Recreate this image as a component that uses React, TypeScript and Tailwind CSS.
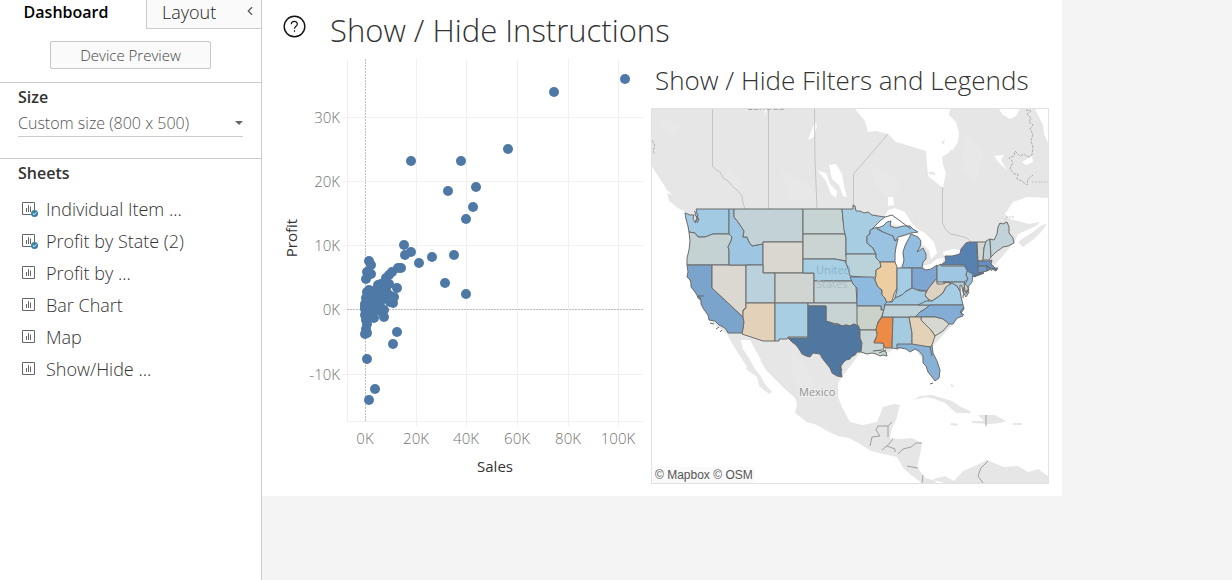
import { ChevronLeft } from "lucide-react";

const SHEETS = [
  { name: "Individual Item ...", used: true },
  { name: "Profit by State (2)", used: true },
  { name: "Profit by ...", used: false },
  { name: "Bar Chart", used: false },
  { name: "Map", used: false },
  { name: "Show/Hide ...", used: false },
];

const X_TICKS: [number, string][] = [
  [365, "0K"], [416, "20K"], [466, "40K"], [517, "60K"], [568, "80K"], [618, "100K"],
];
const Y_TICKS: [number, string][] = [
  [117, "30K"], [181, "20K"], [245, "10K"], [309, "0K"], [374, "-10K"],
];

const POINTS: [number, number][] = [
  [625, 79], [554, 92], [508, 149], [461, 161], [411, 161], [476, 187], [448, 191], [473, 207],
  [466, 219], [404, 245], [411, 252], [405, 255], [432, 257], [454, 255], [419, 263], [445, 283],
  [466, 294], [397, 332], [393, 344], [367, 359], [375, 389], [369, 400], [398, 268], [401, 268],
  [392, 272], [389, 275], [386, 278], [397, 288], [369, 261], [371, 265], [367, 272], [371, 274],
  [368, 275], [366, 279], [378, 285], [381, 284], [385, 284], [389, 284], [369, 290], [367, 292],
  [373, 291], [377, 290], [382, 289], [386, 290], [394, 297], [393, 303], [390, 302], [389, 295],
  [366, 298], [370, 297], [375, 296], [380, 296], [385, 297], [365, 304], [369, 303], [374, 303],
  [380, 303], [384, 310], [384, 317], [382, 312], [365, 309], [370, 309], [376, 309], [365, 315],
  [370, 316], [374, 318], [366, 320], [367, 324], [366, 329], [365, 334], [367, 333], [379, 306],
  [366, 312], [373, 313], [388, 299], [365, 307],
];

const STATES: { id: string; fill: string; d: string }[] = [
  { id: "WA", fill: "#a2cbe3", d: "M696 209H729V234L722 234L713 234L705 237L698 237L695 233L689 232L688 226L686 219L685 213L690 215L694 215L693 219L695 222L697 218L695 214L697 211Z" },
  { id: "OR", fill: "#c5d2d3", d: "M689 232L695 233L698 237L705 237L713 234L730 234L732 237L731 241L728 247L729 250V265H687L687 258L689 250L690 241Z" },
  { id: "CA", fill: "#7ba4cc", d: "M687 265H712V288L743 317L744 322L743 329L742 333L728 333L726 329L723 327L719 325L715 321L709 320L708 315L705 311L703 308L701 304L701 300L698 298L697 295L695 292L691 287L691 283L690 280L687 277L688 272Z" },
  { id: "NV", fill: "#dbd7d1", d: "M712 265H746V308L743 310L743 317L712 288Z" },
  { id: "ID", fill: "#9ec6e2", d: "M729 209H734V217L738 222L742 228L744 231L743 237L747 237L749 242L752 246L757 245L763 244V265H729V250L728 247L731 241L732 237L729 234Z" },
  { id: "MT", fill: "#c2d2d6", d: "M734 209H803V242H763V244L757 245L752 246L749 242L747 237L743 237L744 231L742 228L738 222L734 217Z" },
  { id: "WY", fill: "#dad7d1", d: "M763 242H803V273H763Z" },
  { id: "UT", fill: "#bbd2dd", d: "M746 265H763V273H775V303H746Z" },
  { id: "CO", fill: "#d0d5d1", d: "M775 273H814V303H775Z" },
  { id: "AZ", fill: "#e4d1b9", d: "M746 303H775V341H763L742 334L743 329L744 322L743 317L743 311L746 308Z" },
  { id: "NM", fill: "#a8cee3", d: "M775 303H808V337H788L787 339H779V341H775Z" },
  { id: "ND", fill: "#c7d4d4", d: "M803 209H842L843 220L845 228V234H803Z" },
  { id: "SD", fill: "#c9d4d3", d: "M803 234H845L846 238V255L847 261L840 260L835 259H803Z" },
  { id: "NE", fill: "#a8d0e5", d: "M803 259H835L840 260L845 261L847 265L849 272L853 281H814V273H803Z" },
  { id: "KS", fill: "#c4d3d5", d: "M814 281H853L853 284L856 287L857 303H814Z" },
  { id: "OK", fill: "#c8d3d3", d: "M808 303H857L858 315V326L854 324L850 326L846 325L842 326L838 324L832 323L826 321V306H808Z" },
  { id: "TX", fill: "#4f779f", d: "M808 306H826V321L832 323L835 325L838 324L842 326L846 325L850 326L854 324L859 327L860 331L860 338L862 343L861 352L857 352L855 355L851 357L850 359L846 360L843 363L841 366L841 371L842 377L837 376L832 373L830 368L826 363L822 358L820 354L813 353L810 357L806 356L802 354L799 349L796 345L792 342L788 338H808Z" },
  { id: "MN", fill: "#a7cde3", d: "M842 209H853V205L855 206L856 211L860 211L864 213L868 212L872 215L878 216L885 217L880 221L875 226L870 231L870 234L867 236V243L873 248L876 254H846V238L844 230L843 220Z" },
  { id: "IA", fill: "#bad2da", d: "M846 254H876V258L880 262L881 267L876 270L876 276L873 278L850 276L849 270L846 263Z" },
  { id: "MO", fill: "#8fbae0", d: "M850 277H873L875 280L878 287L882 290L882 295L885 298L887 303L884 310H881V306H857V288L853 284Z" },
  { id: "AR", fill: "#cad2ca", d: "M857 306H881V310H884L882 316L878 322L876 330H860L859 327L857 324Z" },
  { id: "LA", fill: "#c9d5d4", d: "M860 330H876L878 334L874 342L883 343L884 346L883 350L886 352L887 356L883 355L880 356L876 354L872 353L867 354L861 352L862 343L860 338Z" },
  { id: "MS", fill: "#ed8a45", d: "M882 317H893L892 348H885L883 343H874L877 335L876 329L878 323Z" },
  { id: "AL", fill: "#a5cbe1", d: "M893 317H909L912 333V345H897L898 349L892 348Z" },
  { id: "WI", fill: "#9ac3e2", d: "M870 230L877 227V229L883 232L891 234L893 236L895 241L898 239L896 247L895 254V262H880L876 258V254L873 248L867 243V236L870 234Z" },
  { id: "IL", fill: "#edcea3", d: "M880 262H895L897 267V288L894 294L892 301L887 303L885 298L882 295V290L878 287L875 280L876 275V270L881 267Z" },
  { id: "UP", fill: "#98c3e2", d: "M877 228L883 226L887 222L891 221L890 226L896 228L903 226L910 226L913 229L918 232L911 233L905 235L898 237L895 241L893 236L883 232Z" },
  { id: "MI", fill: "#91bde0", d: "M911 234L918 237L921 241L920 247L917 252L923 248L926 254L926 259L923 262L922 268H902L904 260L903 252L905 246L908 240Z" },
  { id: "IN", fill: "#a4cce4", d: "M897 268H912V288L908 290L905 292L902 295L895 298L897 290Z" },
  { id: "OH", fill: "#7fa6d0", d: "M912 268H922L926 270L931 269L937 265V278L932 284L929 289L926 291L920 290L916 290L912 288Z" },
  { id: "KY", fill: "#a1cae2", d: "M912 288L920 291L926 291L926 297L929 300L923 305H884L887 302L892 302L895 298L902 295L905 292Z" },
  { id: "TN", fill: "#bed3d9", d: "M885 305H930L925 309L920 312L915 317H882Z" },
  { id: "WV", fill: "#ddd3c3", d: "M937 278V284H943L947 282L952 284L946 287L943 293L938 297L932 301L928 299L925 295L928 289L932 284Z" },
  { id: "VA", fill: "#a5cde4", d: "M952 283L957 286L960 291L961 297L963 305H918L926 301L932 301L938 297L943 293L946 287Z" },
  { id: "NC", fill: "#83add5", d: "M930 305H963L964 309L961 313L963 316L957 318L953 324H949L943 319L935 317H915L920 312L925 309Z" },
  { id: "SC", fill: "#d8d8d2", d: "M921 317H935L943 319L949 324L943 331L935 336L931 330L926 325L921 320Z" },
  { id: "GA", fill: "#e3d2b7", d: "M909 317H921L921 320L926 325L931 330L935 336L932 345L930 347L912 345V333Z" },
  { id: "FL", fill: "#87b2d5", d: "M897 344H912L930 347L932 345L933 353L937 361L940 370L939 378L935 381L932 377L928 372L926 366L923 363L923 356L919 351L915 349L910 352L906 349L901 348H897Z" },
  { id: "PA", fill: "#9fc7e3", d: "M937 266L941 264V266H965L968 271L966 275L968 279L964 282H937Z" },
  { id: "NY", fill: "#5681b0", d: "M941 265L946 261L945 256L952 256L960 254L961 249L966 243L969 242H977V254L978 262V272L984 273L974 277L972 275L968 272L964 265Z" },
  { id: "MD", fill: "#b3cbd4", d: "M943 282H965V292H969L966 297L963 292L962 286L960 285V291L957 286L952 283Z" },
  { id: "DE", fill: "#d9d0c4", d: "M964 283L967 285L969 291H965Z" },
  { id: "NJ", fill: "#97c0de", d: "M967 271L973 274L972 282L968 287L965 284L968 279L966 275Z" },
  { id: "VT", fill: "#d4d7d0", d: "M977 242H986L984 248L983 261H978Z" },
  { id: "NH", fill: "#bfd3d8", d: "M986 241L990 239L991 257L989 260H983L984 248Z" },
  { id: "ME", fill: "#c1d3d9", d: "M990 239L994 240L997 234L998 227L1000 223L1003 224L1007 222L1009 227V233L1013 238L1014 243L1008 246L1003 247L999 250L996 252L991 257Z" },
  { id: "MA", fill: "#668fbf", d: "M978 261H989L992 260L991 264L995 268L998 268L996 271L990 268L988 266H978Z" },
  { id: "CT", fill: "#7198c6", d: "M978 266H987V271L978 273Z" },
  { id: "RI", fill: "#5f89b8", d: "M987 266L991 269L987 271Z" },
];

function SheetIcon({ used }: { used: boolean }) {
  return (
    <svg className="size-4 shrink-0" viewBox="0 0 16 16" fill="none" aria-hidden="true">
      <path d={used ? "M9 13.5H.5V1.5h12V9" : "M.5 1.5h12v12H.5z"} stroke="#666" />
      <path d="M4.5 7v4M6.5 4v7M8.5 5.5V11" stroke="#666" />
      {used && (
        <>
          <circle cx="12.5" cy="12.5" r="3.5" fill="#3480a5" />
          <path d="m10.8 12.5 1.3 1.2 2.2-2.4" stroke="#fff" />
        </>
      )}
    </svg>
  );
}

function Scatter() {
  return (
    <svg className="w-full" viewBox="262 56 388 428" role="img" aria-label="Profit against Sales">
      <g stroke="#f0f0f0" shapeRendering="crispEdges">
        <path d="M347.5 59V421M347 421.5H643" />
        {X_TICKS.slice(1).map(([x]) => <path key={x} d={`M${x + 0.5} 59V426`} />)}
        {Y_TICKS.map(([y]) => <path key={y} d={`M342 ${y + 0.5}H643`} />)}
      </g>
      <path d="M365.5 59V422M347 309.5H643" stroke="#bdbdbd" strokeDasharray="2 1" shapeRendering="crispEdges" fill="none" />
      <g fill="#4e79a7">
        {POINTS.map(([x, y], i) => <circle key={i} cx={x} cy={y} r="5" />)}
      </g>
      <g fill="#737373" fontSize="15" fontWeight="300">
        {X_TICKS.map(([x, label]) => <text key={x} x={x} y="444" textAnchor="middle">{label}</text>)}
        {Y_TICKS.map(([y, label]) => <text key={y} x="340" y={y + 6} textAnchor="end">{label}</text>)}
      </g>
      <g fill="#333" fontSize="15" textAnchor="middle">
        <text x="495" y="472">Sales</text>
        <text transform="translate(297 238) rotate(-90)">Profit</text>
      </g>
    </svg>
  );
}

function StateMap() {
  return (
    <svg className="block w-full" viewBox="652 109 396 374" role="img" aria-label="Profit by state">
      <g fill="#e6e6e6">
        <path d="M652 109H1048V143L1044 134L1043 125L1039 117L1035 109H1020L1016 116L1010 119L1003 115L999 109H950L949 115L956 122L959 133L958 142L953 150L942 157L943 165L947 176L947 182L943 188L934 184L928 176L926 162L926 151L914 149L903 144L896 142L888 134L876 131L868 132L865 121L855 109ZM652 166L656 173L663 182L667 190L675 196L683 205L687 212L690 240L688 265L690 284L701 304L712 322L727 334L733 345L740 356L747 367L746 369L757 377L759 386L769 394L772 392L765 384L760 375L755 369L749 358L743 349L741 341L750 340L753 349L760 360L766 370L773 377L784 388L795 398L797 405L795 413L807 422L817 425L827 431L838 436L849 438L860 444L871 451L883 454L897 457L903 468L911 475L922 483H937L933 479L945 476L954 481L963 471L975 466L987 460L994 463L1004 467L1018 466L1028 472L1038 469L1048 476V483H945L925 478L917 467L920 455L922 443L912 438L900 439L890 438L892 428L896 420L900 405L894 404L883 407L877 422L863 425L850 422L842 407L838 397V383L842 377L860 353L886 354L897 347L915 349L923 360L939 378L932 347L956 321L963 307L962 292L974 274L993 267L1014 243L1018 234L1027 230L1036 226L1040 222L1029 224L1018 221L1010 219L1005 214L1013 202L1027 197L1048 198V109H652Z" />
        <path d="M652 109H855L870 140L903 144L926 151L928 176L943 188L950 150H1048V196L1013 197L1003 208L986 240L870 260L690 240L683 205L667 190L652 166Z" />
        <path d="M667 193L678 197L687 205L694 212L691 214L678 208L669 201ZM1018 242L1025 237L1033 232L1042 225L1047 224L1041 232L1034 239L1023 247ZM914 400L920 396L932 395L942 398L952 401L961 407L970 411L971 413H956L945 403L935 399L926 397ZM978 415H995L1006 421L1000 423L990 424L972 423V421L984 421ZM951 423L959 424L956 426L950 425ZM1013 423H1022V425H1013ZM950 383L954 386L952 388Z" />
      </g>
      <g fill="#e8e8e8">
        <path d="M660 118L684 126L674 136L660 126ZM728 166L744 182L735 192L725 182ZM780 170L808 185L823 201L790 199ZM870 165L900 181L893 202L876 186ZM964 133L985 150L975 184L963 170ZM792 351L816 381L807 395L793 380Z" />
      </g>
      <g fill="#fff">
        <path d="M829 165L836 164L842 174L845 191L847 197L843 196L839 185L832 179ZM818 171L826 173L830 184L837 191L836 198L831 194L826 181ZM815 122L817 126L814 137L808 140L811 132ZM765 109H767L764 116ZM994 156L1004 155L1001 160L1007 170L1000 164ZM1022 162L1032 156L1033 162L1026 165ZM888 197L893 197L894 205L888 206Z" />
        <path d="M870 230L879 221L885 216L888 210L895 208L905 212L911 222L917 229L925 233L934 242L937 253L931 259L929 250L923 245L918 238L911 235L911 229L901 226L891 224L884 225L877 229ZM899 238L906 236L911 235L905 243L902 254L903 263L898 268L895 262L896 249ZM922 266L931 264L937 259L944 258L942 264L934 269L926 270ZM943 252L953 249L961 250L956 256L944 256ZM740 340L750 340L761 360L758 363L748 347Z" />
      </g>
      <path d="M928 172L934 172L936 175L930 174ZM941 143L945 139L944 144Z" fill="#e6e6e6" />
      <g fill="none" stroke="#c4c4c4" strokeWidth="1">
        <path d="M712.5 109V166L716 170L720 172L723 178L728 181L733 187L737 190L742 196L743 203L745 209M768.5 109V209M814.5 109L815 160L817 208M853.5 209V174L888 134M942.5 187V223L946 230L951 234L960 236L967 238L971 242" />
        <path strokeDasharray="2 1" d="M1032 182H1048M1005 223L1006 217H1015" />
      </g>
      <path d="M1026 110L1031 111L1027 114L1031 118L1029 122L1033 125L1030 129L1033 134L1031 141L1033 147L1032 155L1028 157L1024 154L1020 156L1015 151L1014 156L1009 158L1013 162L1010 169L1014 174L1018 174L1017 179L1022 181L1027 185L1028 179L1033 175M652 140L655 146L653 151L655 154" fill="none" stroke="#b0b0b0" strokeDasharray="3 1" />
      <g fill="none" stroke="#a0a0a0">
        <path d="M870 446L872 437L880 436L876 430L878 426H888V437M888 426L892 422M882 450L889 444L893 439M887 446L895 449V452M898 454L903 449L911 447L916 443L922 443M907 466L912 467L918 468M922 483L923 475M986 415V426M988 461L981 468L978 476L983 483" />
      </g>
      <g stroke="#6b6b6b" strokeLinejoin="round">
        {STATES.map((s) => <path key={s.id} d={s.d} fill={s.fill} />)}
      </g>
      <g fill="none" stroke="#666">
        <path d="M694 211L698 214L697 220L695 223M696 216L699 219L697 223M710 323L714 324M716 329L719 327M720 332L722 330M839 366L842 370L839 373M885 217L892 215L911 229M964 287L963 298M969 287L966 294M964 307L960 312L964 315M974 276L984 273M991 271L993 268L997 270M930 384L933 383M873 351L882 350M930 347L932 356M704 296L698 296L701 299M879 353L886 350" />
      </g>
      <g fontSize="11">
        <text x="816" y="274" fill="#89b0c5">United</text>
        <text x="816" y="288" fill="#abbdc1">States</text>
        <text x="799" y="396" fill="#939393" stroke="#efefef" strokeWidth="2" paintOrder="stroke">Mexico</text>
        <text x="746" y="110" fill="#999">Canada</text>
      </g>
      <path d="M653 467H755V483H653Z" fill="#fafafa" />
      <text className="font-['Liberation_Sans']" x="655" y="479" fontSize="12" fill="#555">© Mapbox © OSM</text>
    </svg>
  );
}

export default function App() {
  return (
    <div className="flex min-h-screen bg-[#f4f4f4] font-['Open_Sans','Noto_Sans',sans-serif] text-[#333]">
      <aside className="flex w-[262px] shrink-0 flex-col border-r border-[#ccc] bg-white">
        <div role="tablist" className="flex h-[29px]">
          <button role="tab" aria-selected="true" className="flex-1 pb-1.5 pr-3.5 text-base font-semibold leading-6 text-black">Dashboard</button>
          <div className="flex w-[115px] items-start justify-between border-b border-l border-[#ccc] bg-[#fafafa] pl-[15px] pr-1">
            <button role="tab" aria-selected="false" className="text-[18px] font-[350] leading-6 text-[#222]">Layout</button>
            <button aria-label="Collapse pane" className="pt-1">
              <ChevronLeft className="size-3.5 text-[#555]" strokeWidth={2} />
            </button>
          </div>
        </div>
        <div className="border-b border-[#ccc] px-[50px] pb-[13px] pt-3">
          <button className="h-7 w-full rounded-xs border border-[#c6c6c6] bg-[#fafafa] text-[15px] font-[350] text-[#444]">Device Preview</button>
        </div>
        <div className="border-b border-[#ccc] px-[18px] pb-[21px] pt-0.5">
          <label htmlFor="size" className="block text-base font-semibold leading-6">Size</label>
          <div className="relative border-b border-[#ccc]">
            <select id="size" className="block h-[27px] w-full appearance-none bg-transparent text-base font-[350] text-[#555]">
              <option>Custom size (800 x 500)</option>
            </select>
            <svg className="pointer-events-none absolute right-0 top-3 h-1 w-2" viewBox="0 0 8 4" aria-hidden="true">
              <path d="M0 0h8L4 4z" fill="#666" />
            </svg>
          </div>
        </div>
        <h2 className="px-[18px] pt-0.5 text-base font-semibold leading-6">Sheets</h2>
        <ul className="pt-2">
          {SHEETS.map((s) => (
            <li key={s.name} className="flex h-8 items-center gap-2 pl-[22px] text-[18px] font-[350]">
              <SheetIcon used={s.used} />
              <span>{s.name}</span>
            </li>
          ))}
        </ul>
      </aside>
      <main className="min-w-0 flex-1">
        <section className="flex max-w-[800px] bg-white pb-3">
          <div className="w-[388px] shrink-0">
            <header className="flex h-14 items-start gap-6 whitespace-nowrap pl-5 pt-2.5">
              <button aria-label="Help" className="pt-1">
                <svg className="size-6" viewBox="0 0 24 24" fill="none" stroke="#111" aria-hidden="true">
                  <circle cx="12.5" cy="12.5" r="10.3" strokeWidth="1.4" />
                  <path d="M9.3 10.2c.1-3.8 6-3.8 6-.3 0 2.4-2.8 2.3-2.8 4.9M12.5 16.3v1.4" strokeWidth="1.2" />
                </svg>
              </button>
              <h1 className="text-[31px] font-light leading-10">Show / Hide Instructions</h1>
            </header>
            <Scatter />
          </div>
          <div className="min-w-0 flex-1 pl-px pr-[13px] pt-[60px]">
            <h2 className="h-12 whitespace-nowrap pl-1 text-[26px] font-light leading-10">Show / Hide Filters and Legends</h2>
            <div className="border border-[#e2e2e2]">
              <StateMap />
            </div>
          </div>
        </section>
      </main>
    </div>
  );
}
